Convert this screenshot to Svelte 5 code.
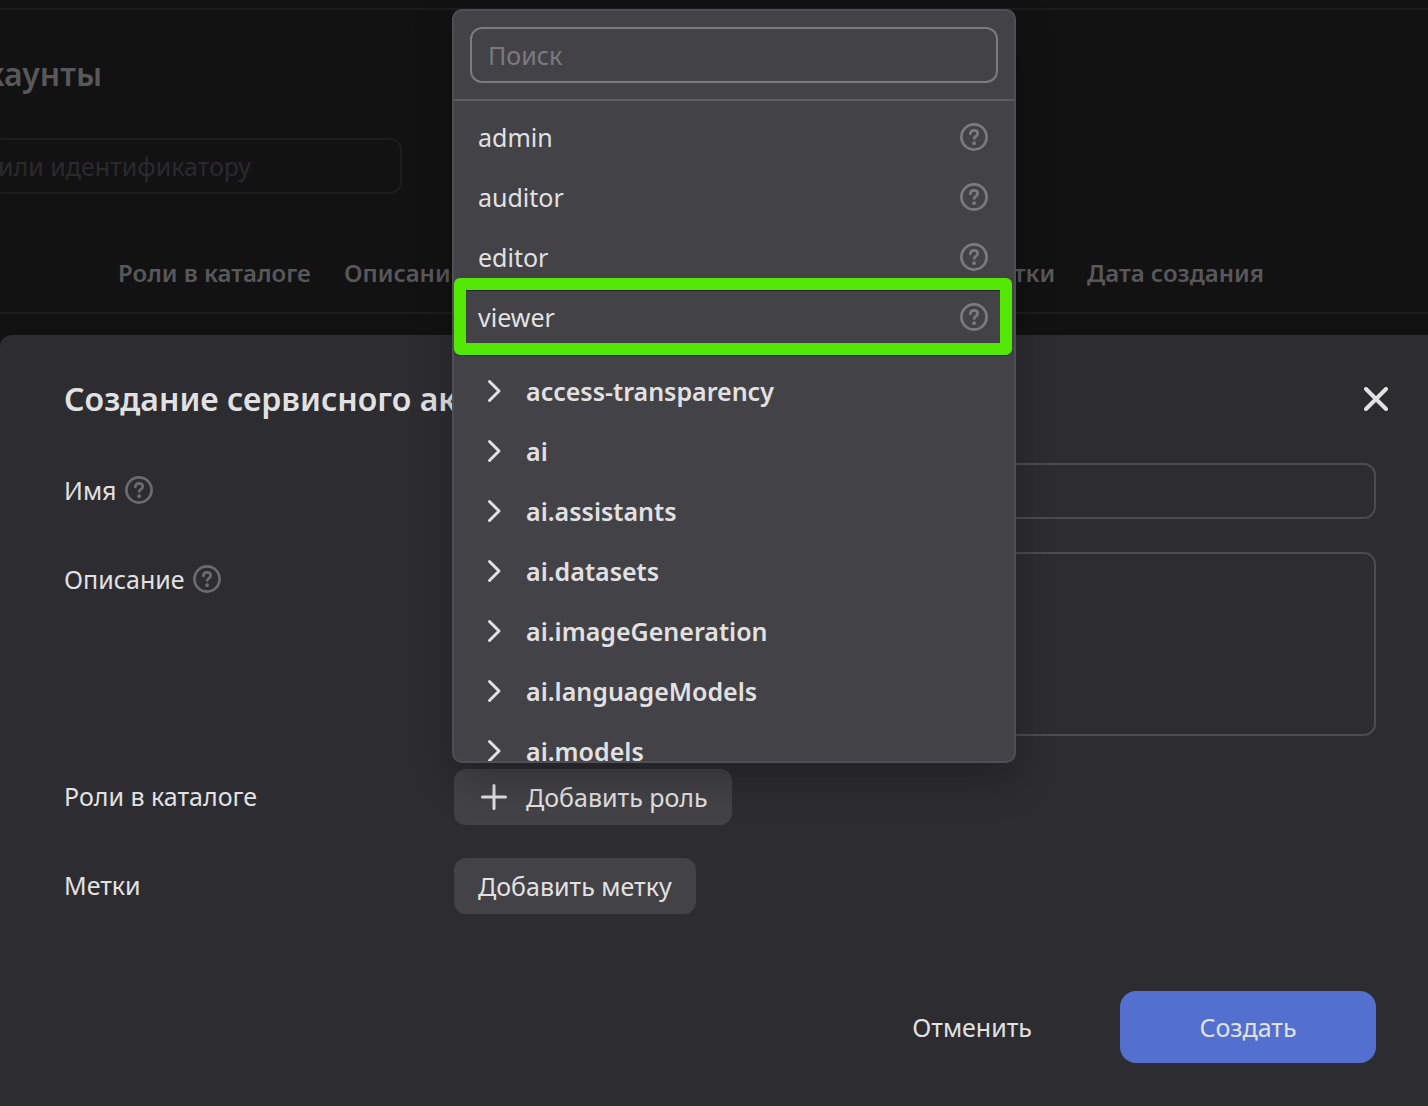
<script>
  const columns = [
    { title: '', size: 'lead' },
    { title: 'Роли в каталоге', size: 'roles' },
    { title: 'Описание', size: 'about' },
    { title: 'Метки', size: 'tags' },
    { title: 'Дата создания', size: 'date' }
  ];
  const roles = ['admin', 'auditor', 'editor', 'viewer'];
  const groups = [
    'access-transparency',
    'ai',
    'ai.assistants',
    'ai.datasets',
    'ai.imageGeneration',
    'ai.languageModels',
    'ai.models'
  ];
  let selected = $state('viewer');
</script>

{#snippet help()}
  <svg class="help" viewBox="0 0 28 28" aria-hidden="true">
    <circle cx="14" cy="14" r="12.6" />
    <path d="M10.300 10.900c.2-2.200 1.600-3.500 3.700-3.500 2.100 0 3.700 1.300 3.700 3.200 0 2.800-3.500 2.700-3.500 4.900" />
    <circle class="dot" cx="14.1" cy="20.2" r="1.9" />
  </svg>
{/snippet}

<div class="screen">
  <main class="page">
    <h1>каунты</h1>
    <input class="filter" type="text" placeholder="или идентификатору" aria-label="Фильтр" />
    <table>
      <thead>
        <tr>
          {#each columns as column}
            <th class={column.size} scope="col">{column.title}</th>
          {/each}
        </tr>
      </thead>
    </table>
  </main>

  <section class="dialog" role="dialog" aria-labelledby="dialog-title">
    <header>
      <h2 id="dialog-title">Создание сервисного аккаунта</h2>
      <button class="close" type="button" aria-label="Закрыть">
        <svg viewBox="0 0 24 24" aria-hidden="true"><path d="M2 2l20 20M22 2L2 22" /></svg>
      </button>
    </header>

    <form>
      <label for="name">Имя {@render help()}</label>
      <input id="name" class="field" type="text" />

      <label for="about">Описание {@render help()}</label>
      <textarea id="about" class="field"></textarea>

      <label for="add-role">Роли в каталоге</label>
      <div class="picker">
        <button id="add-role" class="soft" type="button">
          <svg class="icon" viewBox="0 0 32 32" aria-hidden="true"><path d="M16 4.500v23M4.500 16h23" /></svg>
          Добавить роль
        </button>

        <div class="popup">
          <div class="search">
            <input type="text" placeholder="Поиск" aria-label="Поиск" />
          </div>
          <div class="list">
            <ul>
              {#each roles as role}
                <li class:marked={selected === role}>
                  <button class="role" type="button" onclick={() => (selected = role)}>
                    {role}
                    {@render help()}
                  </button>
                </li>
              {/each}
            </ul>
            <ul>
              {#each groups as group}
                <li>
                  <button class="group" type="button">
                    <svg class="icon" viewBox="0 0 32 32" aria-hidden="true"><path d="M11.500 6.500l9.500 9.500-9.500 9.500" /></svg>
                    {group}
                  </button>
                </li>
              {/each}
            </ul>
          </div>
        </div>
      </div>

      <label for="add-tag">Метки</label>
      <div>
        <button id="add-tag" class="soft" type="button">Добавить метку</button>
      </div>
    </form>

    <footer>
      <button class="cancel" type="button">Отменить</button>
      <button class="create" type="button">Создать</button>
    </footer>
  </section>
</div>

<style>
  :global(body) {
    background: #121213;
  }

  .screen {
    display: flex;
    flex-direction: column;
    min-height: 100vh;
    overflow: hidden;
    color: #e2e1e2;
    font-family: 'Noto Sans', 'Open Sans', sans-serif;
    font-size: 25px;
    line-height: 36px;
  }

  .screen * {
    box-sizing: border-box;
  }

  button,
  input,
  textarea {
    margin: 0;
    padding: 0;
    border: 0;
    outline: 0;
    background: none;
    color: inherit;
    font: inherit;
  }

  button {
    cursor: pointer;
  }

  svg {
    flex: none;
    fill: none;
    stroke: currentColor;
    stroke-linecap: round;
    stroke-linejoin: round;
  }

  .page {
    margin-top: 8px;
    border-top: 2px solid #1c1c1e;
    padding-bottom: 21px;
    color: #58585a;
  }

  h1 {
    margin: 44px 0 0 -14px;
    font-size: 32px;
    font-weight: 600;
    line-height: 40px;
  }

  .filter {
    display: block;
    width: 412px;
    height: 56px;
    margin: 44px 0 0 -10px;
    padding: 0 6px;
    border: 2px solid #1e1e20;
    border-radius: 12px;
  }

  .filter::placeholder {
    color: #2a2a2c;
    opacity: 1;
  }

  table {
    width: 100%;
    margin-top: 44px;
    border-collapse: collapse;
    table-layout: fixed;
  }

  th {
    height: 75px;
    padding: 0 0 4px;
    border-bottom: 2px solid #1e1e20;
    font-size: 24px;
    font-weight: 600;
    text-align: left;
    white-space: nowrap;
  }

  .lead {
    width: 118px;
  }

  .roles {
    width: 226px;
  }

  .about {
    width: 634px;
  }

  .tags {
    width: 109px;
  }

  .dialog {
    flex: 1;
    padding: 40px 52px 40px 64px;
    border-top-left-radius: 12px;
    background: #2d2c31;
  }

  header {
    display: flex;
    align-items: center;
    justify-content: space-between;
    height: 48px;
  }

  h2 {
    margin: 0;
    font-size: 32px;
    font-weight: 600;
    line-height: 48px;
  }

  .close {
    display: grid;
    place-items: center;
    width: 48px;
    height: 48px;
    margin-right: -24px;
  }

  .close svg {
    width: 24px;
    height: 24px;
    stroke-width: 4;
  }

  form {
    display: grid;
    grid-template-columns: 390px 1fr;
    row-gap: 33px;
    margin-top: 40px;
  }

  label {
    display: flex;
    align-items: center;
    gap: 8px;
    height: 54px;
  }

  .help {
    width: 28px;
    height: 28px;
    color: #6c6b6f;
    stroke-width: 2.7;
  }

  .help .dot {
    fill: currentColor;
    stroke: none;
  }

  .popup .help {
    color: #7b7a7e;
  }

  .field {
    display: block;
    width: 100%;
    height: 56px;
    padding: 8px 16px;
    border: 2px solid #4c4b50;
    border-radius: 12px;
    resize: none;
  }

  textarea.field {
    height: 184px;
  }

  .picker {
    position: relative;
  }

  .soft {
    display: inline-flex;
    align-items: center;
    gap: 16px;
    height: 56px;
    padding: 0 24px;
    border-radius: 12px;
    background: #434247;
  }

  .icon {
    width: 32px;
    height: 32px;
    stroke-width: 3;
  }

  .popup {
    position: absolute;
    bottom: calc(100% + 6px);
    left: -2px;
    display: flex;
    flex-direction: column;
    width: 564px;
    height: 754px;
    overflow: hidden;
    border: 2px solid #4f4e54;
    border-radius: 10px;
    background: #434247;
    box-shadow: 0 16px 40px rgb(0 0 0 / 25%);
  }

  .search {
    padding: 16px;
    border-bottom: 2px solid #5d5c61;
  }

  .search input {
    display: block;
    width: 100%;
    height: 56px;
    padding: 0 16px;
    border: 2px solid #7b7a7e;
    border-radius: 12px;
  }

  .search input::placeholder {
    color: #7b7a7e;
    opacity: 1;
  }

  .list {
    flex: 1;
    min-height: 0;
    padding-top: 6px;
    overflow: hidden;
  }

  ul {
    margin: 0 0 14px;
    padding: 0;
    list-style: none;
  }

  li {
    position: relative;
  }

  .marked::after {
    position: absolute;
    inset: -9px 2px -8px 0;
    border: 12px solid #54e806;
    border-radius: 6px;
    box-shadow: 0 1px 0 #252427, inset 0 1px 0 #252427;
    content: '';
    pointer-events: none;
  }

  .role,
  .group {
    display: flex;
    align-items: center;
    width: 100%;
    height: 60px;
    padding: 0 26px 0 24px;
    text-align: left;
  }

  .role {
    justify-content: space-between;
  }

  .group {
    gap: 16px;
    font-weight: 600;
  }

  footer {
    display: flex;
    justify-content: flex-end;
    gap: 32px;
    margin-top: 77px;
  }

  footer button {
    height: 72px;
    border-radius: 16px;
  }

  .cancel {
    padding: 0 56px;
  }

  .create {
    width: 256px;
    background: #5370cf;
  }
</style>
